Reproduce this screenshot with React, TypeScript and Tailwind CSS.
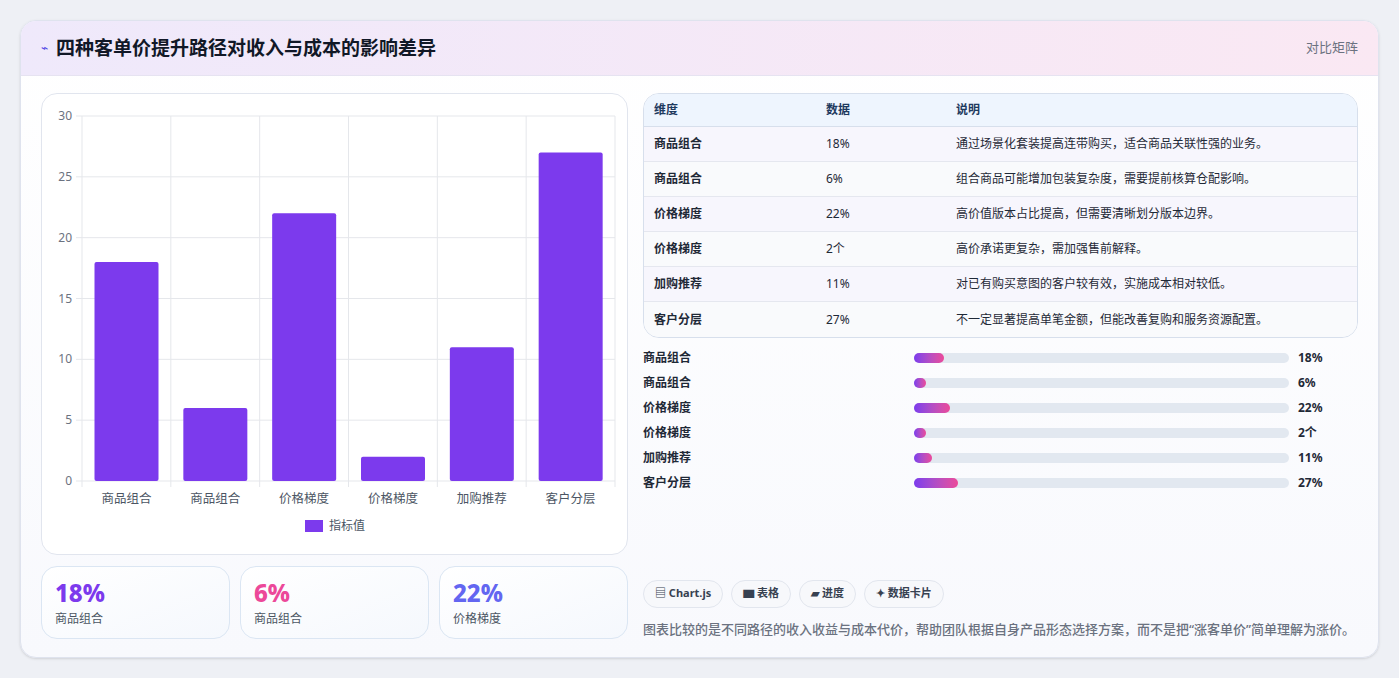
import React from "react";

const rows = [
  ["商品组合", "18%", "通过场景化套装提高连带购买，适合商品关联性强的业务。"],
  ["商品组合", "6%", "组合商品可能增加包装复杂度，需要提前核算仓配影响。"],
  ["价格梯度", "22%", "高价值版本占比提高，但需要清晰划分版本边界。"],
  ["价格梯度", "2个", "高价承诺更复杂，需加强售前解释。"],
  ["加购推荐", "11%", "对已有购买意图的客户较有效，实施成本相对较低。"],
  ["客户分层", "27%", "不一定显著提高单笔金额，但能改善复购和服务资源配置。"],
];
const vals = [18, 6, 22, 2, 11, 27];
const bw = [30, 12, 36, 12, 18, 44];

function Chart() {
  const x0 = 40, y0 = 22, w = 533, h = 365;
  const cw = w / 6;
  const y = (v: number) => y0 + h - (v / 30) * h;
  return (
    <svg width="586" height="461" className="block">
      {[0, 5, 10, 15, 20, 25, 30].map((t) => (
        <g key={t}>
          <line x1={x0 - 6} x2={x0 + w} y1={y(t)} y2={y(t)} stroke="#e5e7eb" />
          <text x={x0 - 10} y={y(t) + 4} textAnchor="end" fontSize="12" fill="#6b7280">{t}</text>
        </g>
      ))}
      {[0, 1, 2, 3, 4, 5, 6].map((i) => (
        <line key={i} x1={x0 + i * cw} x2={x0 + i * cw} y1={y0} y2={y0 + h + 6} stroke="#e5e7eb" />
      ))}
      {vals.map((v, i) => (
        <g key={i}>
          <rect x={x0 + i * cw + 12.5} y={y(v)} width={64} height={y0 + h - y(v)} fill="#7c3aed" rx="2" />
          <text x={x0 + i * cw + cw / 2} y={409} textAnchor="middle" fontSize="12.5" fill="#4b5563">{rows[i][0]}</text>
        </g>
      ))}
      <rect x="263" y="426" width="18" height="12" fill="#7c3aed" />
      <text x="287" y="436" fontSize="12" fill="#4b5563">指标值</text>
    </svg>
  );
}

export default function App() {
  return (
    <div className="min-h-[678px] bg-[#eef0f5] p-5" style={{ fontFamily: '"Noto Sans", "Noto Sans CJK SC", sans-serif' }}>
      <div className="rounded-2xl border border-[#dfe3ee] bg-gradient-to-b from-white to-[#f8f9fd] overflow-hidden shadow-sm">
        <div className="h-[55px] flex items-center justify-between px-5 bg-gradient-to-r from-[#efe9fb] to-[#fae8f3] border-b border-[#e6e3f1]">
          <div className="flex items-center gap-2">
            <span className="text-[#4f46e5] text-xs">⌁</span>
            <span className="text-[19px] font-bold text-[#111827]">四种客单价提升路径对收入与成本的影响差异</span>
          </div>
          <span className="text-[13px] text-[#6b7280]">对比矩阵</span>
        </div>
        <div className="flex gap-[15px] px-5 pt-[17px] pb-[18px]">
          <div className="w-[587px] flex flex-col gap-[11px]">
            <div className="h-[462px] rounded-2xl border border-[#e1e5ee] bg-white overflow-hidden"><Chart /></div>
            <div className="grid grid-cols-3 gap-[10px]">
              {[["18%", "#7c3aed"], ["6%", "#ec4899"], ["22%", "#6366f1"]].map(([v, c], i) => (
                <div key={i} className="h-[73px] rounded-2xl border border-[#dbe6f3] bg-gradient-to-br from-white to-[#f5f8fd] px-[13px] pt-[10px]">
                  <div className="text-[24px] font-extrabold leading-[32px]" style={{ color: c }}>{v}</div>
                  <div className="text-[12px] text-[#4b5563] mt-[1px]">{rows[i][0]}</div>
                </div>
              ))}
            </div>
          </div>
          <div className="flex-1 flex flex-col">
            <div className="rounded-2xl border border-[#d7dfec] overflow-hidden bg-white">
              <div className="grid grid-cols-[172px_130px_1fr] h-[33px] items-center bg-[#eef5fe] border-b border-[#d7dfec] px-[10px] text-[12px] font-bold text-[#1e3a5f]">
                <span>维度</span><span>数据</span><span>说明</span>
              </div>
              {rows.map((r, i) => (
                <div key={i} className={`grid grid-cols-[172px_130px_1fr] h-[35px] items-center px-[10px] text-[12px] text-[#1f2937] ${i % 2 ? "bg-[#f9fafc]" : "bg-[#f7f6fd]"} ${i < 5 ? "border-b border-[#e5e7ef]" : ""}`}>
                  <span className="font-bold">{r[0]}</span><span>{r[1]}</span><span>{r[2]}</span>
                </div>
              ))}
            </div>
            <div className="mt-[7px] flex flex-col">
              {rows.map((r, i) => (
                <div key={i} className="h-[25px] flex items-center text-[12px] font-bold text-[#1f2937]">
                  <span className="w-[271px]">{r[0]}</span>
                  <div className="w-[375px] h-[10px] rounded-full bg-[#e2e8f0]">
                    <div className="h-full rounded-full bg-gradient-to-r from-[#7c3aed] to-[#ec4899]" style={{ width: bw[i] }} />
                  </div>
                  <span className="ml-[9px]">{r[1]}</span>
                </div>
              ))}
            </div>
            <div className="mt-auto">
              <div className="flex gap-2 mb-[12px]">
                {["▤ Chart.js", "▆ 表格", "▰ 进度", "✦ 数据卡片"].map((t) => (
                  <span key={t} className="h-[28px] px-[11px] flex items-center rounded-full border border-[#e2e6ee] bg-[#f7f8fb] text-[11px] font-bold text-[#374151]">{t}</span>
                ))}
              </div>
              <div className="text-[13px] text-[#6b7280] font-medium">图表比较的是不同路径的收入收益与成本代价，帮助团队根据自身产品形态选择方案，而不是把“涨客单价”简单理解为涨价。</div>
            </div>
          </div>
        </div>
      </div>
    </div>
  );
}
